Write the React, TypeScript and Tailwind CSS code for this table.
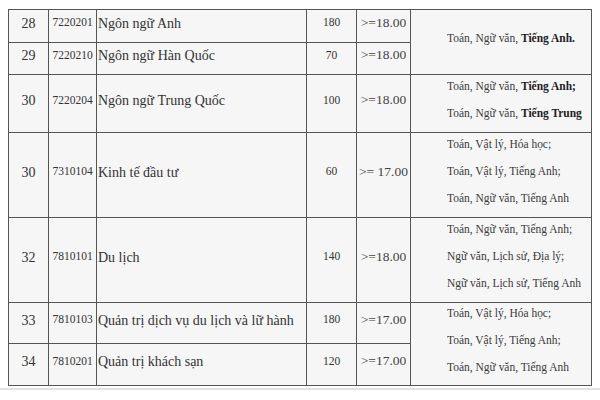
import React from "react";

type Row = {
  no: string;
  code: string;
  name: string;
  count: string;
  score: string;
};

const rows: Row[] = [
  { no: "28", code: "7220201", name: "Ngôn ngữ Anh", count: "180", score: ">=18.00" },
  { no: "29", code: "7220210", name: "Ngôn ngữ Hàn Quốc", count: "70", score: ">=18.00" },
  { no: "30", code: "7220204", name: "Ngôn ngữ Trung Quốc", count: "100", score: ">=18.00" },
  { no: "30", code: "7310104", name: "Kinh tế đầu tư", count: "60", score: ">= 17.00" },
  { no: "32", code: "7810101", name: "Du lịch", count: "140", score: ">=18.00" },
  { no: "33", code: "7810103", name: "Quản trị dịch vụ du lịch và lữ hành", count: "180", score: ">=17.00" },
  { no: "34", code: "7810201", name: "Quản trị khách sạn", count: "120", score: ">=17.00" },
];

const rowStart = [
  "row-start-1",
  "row-start-2",
  "row-start-3",
  "row-start-4",
  "row-start-5",
  "row-start-6",
  "row-start-7",
];

function Subjects({ lines, span, start }: { lines: React.ReactNode[]; span: string; start: string }) {
  return (
    <div className={`col-start-6 ${start} ${span} bg-[#f6f6f6] flex items-center pl-[36px] pb-[9px]`}>
      <div className="origin-left scale-x-[0.85] text-[13.5px] leading-[27px] text-[#3a3a3a] whitespace-nowrap">
        {lines.map((l, i) => (
          <div key={i}>{l}</div>
        ))}
      </div>
    </div>
  );
}

export default function App() {
  return (
    <div className="w-[600px] h-[400px] bg-white font-['Liberation_Serif','Times_New_Roman',serif] text-[#333]">
      <div className="pt-[9px] pl-[8px]">
        <div className="grid w-fit grid-cols-[39px_47px_209px_49px_53px_180px] grid-rows-[32px_31px_57px_84px_84px_40px_41px] gap-px bg-[#555] border border-[#555]">
          {rows.map((r, i) => (
            <React.Fragment key={i}>
              <div className={`col-start-1 ${rowStart[i]} bg-[#f6f6f6] flex items-center justify-center pb-[6px] text-[14px]`}>
                {r.no}
              </div>
              <div className={`col-start-2 ${rowStart[i]} bg-[#f6f6f6] flex items-center justify-center pb-[6px] text-[11.5px]`}>
                {r.code}
              </div>
              <div className={`col-start-3 ${rowStart[i]} bg-[#f6f6f6] flex items-center pl-[1px] pb-[6px] text-[14px] whitespace-nowrap`}>
                {r.name}
              </div>
              <div className={`col-start-4 ${rowStart[i]} bg-[#f6f6f6] flex items-center justify-center pb-[6px] text-[11.5px]`}>
                {r.count}
              </div>
              <div className={`col-start-5 ${rowStart[i]} bg-[#f6f6f6] flex items-center justify-center pb-[6px] text-[13.5px] text-[#444] whitespace-pre`}>
                {r.score}
              </div>
            </React.Fragment>
          ))}
          <Subjects
            start="row-start-1"
            span="row-span-2"
            lines={[
              <>
                Toán, Ngữ văn, <b className="text-[#222]">Tiếng Anh.</b>
              </>,
            ]}
          />
          <Subjects
            start="row-start-3"
            span="row-span-1"
            lines={[
              <>
                Toán, Ngữ văn, <b className="text-[#222]">Tiếng Anh;</b>
              </>,
              <>
                Toán, Ngữ văn, <b className="text-[#222]">Tiếng Trung</b>
              </>,
            ]}
          />
          <Subjects
            start="row-start-4"
            span="row-span-1"
            lines={["Toán, Vật lý, Hóa học;", "Toán, Vật lý, Tiếng Anh;", "Toán, Ngữ văn, Tiếng Anh"]}
          />
          <Subjects
            start="row-start-5"
            span="row-span-1"
            lines={["Toán, Ngữ văn, Tiếng Anh;", "Ngữ văn, Lịch sử, Địa lý;", "Ngữ văn, Lịch sử, Tiếng Anh"]}
          />
          <Subjects
            start="row-start-6"
            span="row-span-2"
            lines={["Toán, Vật lý, Hóa học;", "Toán, Vật lý, Tiếng Anh;", "Toán, Ngữ văn, Tiếng Anh"]}
          />
        </div>
      </div>
      <div className="mt-[2px] h-[2px] w-full bg-[#e2e2e2]" />
    </div>
  );
}
